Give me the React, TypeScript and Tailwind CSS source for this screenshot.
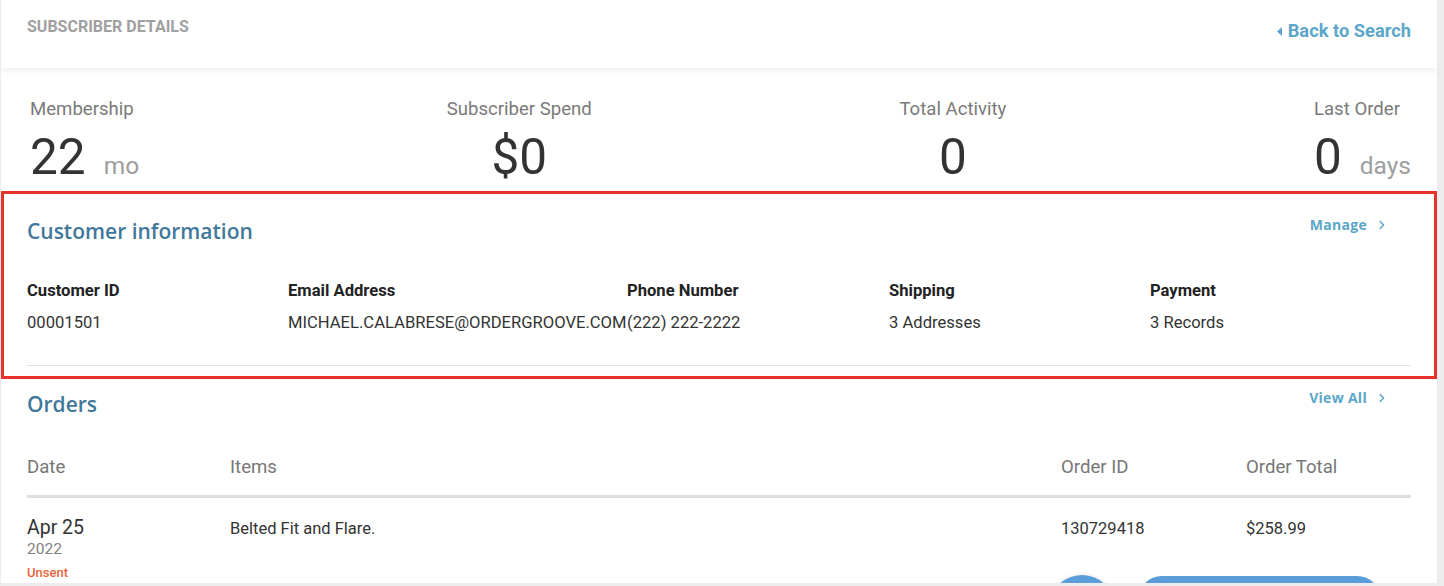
import type { ReactNode } from "react"

const stats = [
  { label: "Membership", value: "22", unit: "mo", align: "start" },
  { label: "Subscriber Spend", value: "$0", unit: "", align: "center" },
  { label: "Total Activity", value: "0", unit: "", align: "center" },
  { label: "Last Order", value: "0", unit: "days", align: "start" },
]

const fields = [
  { label: "Customer ID", value: "00001501" },
  { label: "Email Address", value: "MICHAEL.CALABRESE@ORDERGROOVE.COM" },
  { label: "Phone Number", value: "(222) 222-2222" },
  { label: "Shipping", value: "3 Addresses" },
  { label: "Payment", value: "3 Records" },
]

function Chevron() {
  return (
    <svg width="6" height="10" viewBox="0 0 6 10" className="ml-[12px]" aria-hidden>
      <path d="M1.2 1.5 4.6 5 1.2 8.5" fill="none" stroke="currentColor" strokeWidth="1.5" strokeLinecap="round" strokeLinejoin="round" />
    </svg>
  )
}

function SectionHead({ title, action }: { title: string; action: string }) {
  return (
    <div className="flex items-start justify-between">
      <h2 className="font-['Open_Sans',sans-serif] text-[21px] font-semibold leading-[28px] text-[#41779a]">{title}</h2>
      <a className="mr-[26px] -mt-[2px] flex items-center font-['Open_Sans',sans-serif] text-[14px] font-bold leading-[20px] tracking-[0.3px] text-[#5ba6c9]">
        {action}
        <Chevron />
      </a>
    </div>
  )
}

function Stat({ label, value, unit, align }: { label: string; value: string; unit: string; align: string }) {
  const center = align === "center"
  return (
    <div className={center ? "flex flex-col items-center text-center" : "flex flex-col items-start"}>
      <p className="text-[18.6px] leading-[24px] text-[#7a7a7a]">{label}</p>
      <div className="mt-2 flex items-baseline gap-[18px]">
        <span className="text-[49.5px] leading-[56px] text-[#333]">{value}</span>
        {unit ? <span className="text-[24.5px] leading-[28px] text-[#9e9e9e]">{unit}</span> : null}
      </div>
    </div>
  )
}

function Cell({ children, className = "" }: { children: ReactNode; className?: string }) {
  return <div className={className}>{children}</div>
}

export default function App() {
  return (
    <div className="h-[586px] w-full overflow-hidden bg-[#ececec] pb-[3px] pl-px pr-[7px] font-['Roboto',sans-serif]">
      <div className="relative h-full overflow-hidden bg-white">
        <header className="relative z-10 flex h-[68px] items-start justify-between bg-white px-[26px] shadow-[0_3px_7px_rgba(0,0,0,0.07)]">
          <p className="pt-[17px] text-[16px] font-bold uppercase leading-[20px] text-[#a0a0a0]">Subscriber Details</p>
          <a className="flex items-center gap-[6px] pt-[19px] text-[18.3px] font-bold leading-[24px] text-[#5ba6c9]">
            <svg width="5" height="9" viewBox="0 0 5 9" aria-hidden>
              <path d="M5 0 0 4.5 5 9Z" fill="currentColor" />
            </svg>
            Back to Search
          </a>
        </header>

        <section className="flex justify-between pl-[29px] pr-[26px] pt-[29px]">
          {stats.map((s) => (
            <Stat key={s.label} {...s} />
          ))}
        </section>

        <section className="mt-[6px] border-[3px] border-[#e5332a] px-[23px] pb-[10px] pt-[23px]">
          <SectionHead title="Customer information" action="Manage" />
          <div className="mt-[34px] grid grid-cols-[261px_339px_262px_261px_1fr]">
            {fields.map((f) => (
              <div key={f.label} className="whitespace-nowrap">
                <p className="text-[16.6px] font-bold leading-[24px] text-[#222]">{f.label}</p>
                <p className="mt-2 text-[16.6px] leading-[24px] text-[#333]">{f.value}</p>
              </div>
            ))}
          </div>
          <div className="mt-[30px] h-px bg-[#e2e2e2]" />
        </section>

        <section className="px-[26px] pt-[11px]">
          <SectionHead title="Orders" action="View All" />
          <div className="mt-[37px] grid grid-cols-[203px_1fr_185px_165px] border-b-[3px] border-[#dedede] pb-[16px] text-[18.6px] leading-[24px] text-[#777]">
            <Cell>Date</Cell>
            <Cell>Items</Cell>
            <Cell>Order ID</Cell>
            <Cell>Order Total</Cell>
          </div>
          <div className="grid grid-cols-[203px_1fr_185px_165px] pt-[19px] text-[16.5px] leading-[22px] text-[#333]">
            <Cell>
              <p className="text-[19.5px] leading-[22px]">Apr 25</p>
              <p className="text-[15.5px] leading-[20px] text-[#808080]">2022</p>
              <p className="mt-[6px] text-[13px] font-medium leading-[16px] text-[#e8663a]">Unsent</p>
            </Cell>
            <Cell className="pt-px">Belted Fit and Flare.</Cell>
            <Cell className="pt-px">130729418</Cell>
            <Cell className="pt-px">$258.99</Cell>
          </div>
        </section>

        <div className="absolute left-[1048px] top-[575px] h-[66px] w-[66px] rounded-full bg-[#5b9dd9] shadow-[0_2px_6px_rgba(0,0,0,0.2)]" />
        <div className="absolute left-[1137px] top-[576px] h-[48px] w-[243px] rounded-full bg-[#5b9dd9]" />
      </div>
    </div>
  )
}
